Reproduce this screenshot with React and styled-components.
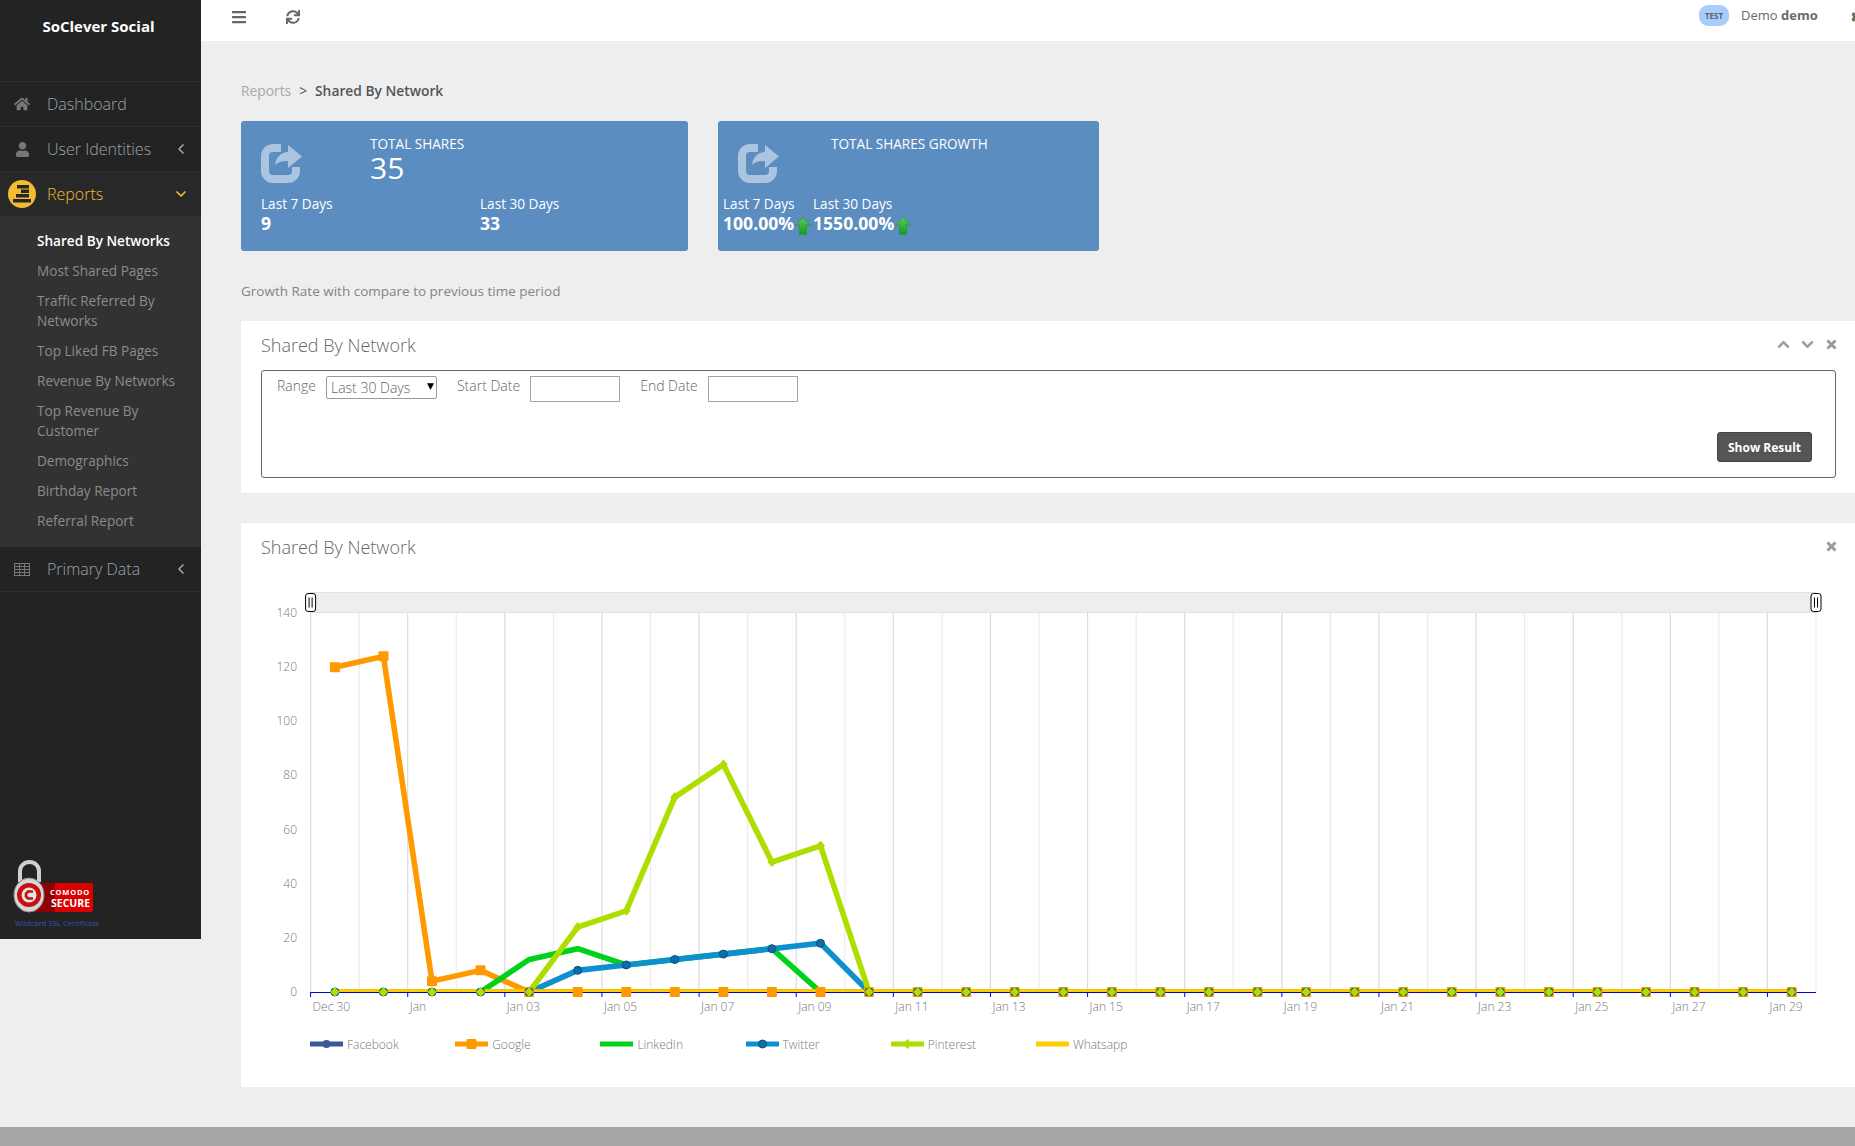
import React from "react";
import styled, { createGlobalStyle } from "styled-components";
import {
  FaBars,
  FaSync,
  FaHome,
  FaUser,
  FaChevronUp,
  FaChevronDown,
  FaTimes,
  FaCog,
} from "react-icons/fa";
import { FiChevronLeft, FiChevronDown } from "react-icons/fi";

const GlobalStyle = createGlobalStyle`
  html, body {
    margin: 0;
    padding: 0;
    height: 100%;
    overflow: hidden;
    background: #eeeeee;
    font-family: "Open Sans", "Liberation Sans", sans-serif;
    font-size: 14px;
    color: #676a6c;
  }
  * { box-sizing: border-box; }
`;

const subItems = [
  { label: "Shared By Networks", active: true },
  { label: "Most Shared Pages" },
  { label: "Traffic Referred By Networks" },
  { label: "Top Liked FB Pages" },
  { label: "Revenue By Networks" },
  { label: "Top Revenue By Customer" },
  { label: "Demographics" },
  { label: "Birthday Report" },
  { label: "Referral Report" },
];

const zeros = () => Array(31).fill(0);
const withValues = (values) => {
  const out = zeros();
  Object.keys(values).forEach((k) => (out[k] = values[k]));
  return out;
};

const series = [
  { name: "Facebook", color: "#3b5998", marker: "circle", data: zeros() },
  {
    name: "Google",
    color: "#ff9900",
    marker: "square",
    data: withValues({ 0: 120, 1: 124, 2: 4, 3: 8 }),
  },
  {
    name: "LinkedIn",
    color: "#00d11a",
    data: withValues({ 4: 12, 5: 16, 6: 10, 7: 12, 8: 14, 9: 16 }),
  },
  {
    name: "Twitter",
    color: "#0d8fd0",
    marker: "dot",
    data: withValues({ 5: 8, 6: 10, 7: 12, 8: 14, 9: 16, 10: 18 }),
  },
  {
    name: "Pinterest",
    color: "#aede00",
    marker: "diamond",
    data: withValues({ 5: 24, 6: 30, 7: 72, 8: 84, 9: 48, 10: 54 }),
  },
  { name: "Whatsapp", color: "#ffcc00", data: zeros() },
];

const dateLabels = [
  "Dec 30", "Jan", "Jan 03", "Jan 05", "Jan 07", "Jan 09", "Jan 11", "Jan 13",
  "Jan 15", "Jan 17", "Jan 19", "Jan 21", "Jan 23", "Jan 25", "Jan 27", "Jan 29",
];

const plotLeft = 310.6;
const plotRight = 1816;
const plotTop = 612;
const plotBottom = 991;
const step = (plotRight - plotLeft) / 31;
const xAt = (i) => plotLeft + (i + 0.5) * step;
const yAt = (v) => plotBottom - (v / 140) * (plotBottom - plotTop);

const Marker = ({ type, color, x, y }) => {
  if (type === "circle") return <circle cx={x} cy={y} r="4" fill={color} />;
  if (type === "square")
    return <rect x={x - 5} y={y - 5} width="10" height="10" rx="1" fill={color} />;
  if (type === "dot")
    return <circle cx={x} cy={y} r="4" fill="#0b6ea8" stroke="#0a4f7c" strokeWidth="1" />;
  if (type === "diamond")
    return (
      <polygon
        points={`${x},${y - 5} ${x + 4.5},${y} ${x},${y + 5} ${x - 4.5},${y}`}
        fill={color}
      />
    );
  return null;
};

const SharesChart = () => (
  <ChartSvg viewBox="241 580 1614 440">
    <defs>
      <clipPath id="plot-clip">
        <rect x={plotLeft} y={plotTop} width={plotRight - plotLeft} height={plotBottom - plotTop} />
      </clipPath>
    </defs>
    {Array.from({ length: 32 }).map((_, i) => (
      <line
        key={i}
        x1={plotLeft + i * step}
        x2={plotLeft + i * step}
        y1={plotTop}
        y2={plotBottom}
        stroke={i % 2 === 0 ? "#dcdcdc" : "#ececec"}
        strokeWidth="1.2"
      />
    ))}
    <rect x={plotLeft} y="591.5" width={plotRight - plotLeft} height="20" fill="#eeeeee" stroke="#e0e0e0" />
    {[plotLeft, plotRight].map((x) => (
      <g key={x}>
        <rect x={x - 5} y="592.5" width="10" height="18" rx="2.5" fill="#fff" stroke="#000" />
        <line x1={x - 1.5} x2={x - 1.5} y1="596.500" y2="606.500" stroke="#000" />
        <line x1={x + 1.5} x2={x + 1.5} y1="596.500" y2="606.500" stroke="#000" />
      </g>
    ))}

    {[0, 20, 40, 60, 80, 100, 120, 140].map((v) => (
      <AxisText key={v} x="297" y={yAt(v) + 4} textAnchor="end">
        {v}
      </AxisText>
    ))}
    {dateLabels.map((label, k) => (
      <AxisText key={label} x={plotLeft + 2 + k * step * 2} y="1010">
        {label}
      </AxisText>
    ))}

    <line x1={plotLeft} x2={plotRight} y1="991.5" y2="991.5" stroke="#0000e0" strokeWidth="1.2" />
    {Array.from({ length: 16 }).map((_, k) => (
      <line
        key={k}
        x1={plotLeft + k * step * 2}
        x2={plotLeft + k * step * 2}
        y1="991"
        y2="996"
        stroke="#0000e0"
      />
    ))}

    <g clipPath="url(#plot-clip)">
      {series.map((s) => (
        <polyline
          key={s.name}
          points={s.data.map((v, i) => `${xAt(i)},${yAt(v)}`).join(" ")}
          fill="none"
          stroke={s.color}
          strokeWidth="5.6"
          strokeLinejoin="miter"
        />
      ))}
    </g>
    {series.map((s) =>
      s.data.map((v, i) => (
        <Marker key={s.name + i} type={s.marker} color={s.color} x={xAt(i)} y={yAt(v)} />
      ))
    )}
  </ChartSvg>
);

const LegendKey = ({ color, marker }) => (
  <svg width="33" height="12" viewBox="0 0 33 12">
    <line x1="0" x2="33" y1="6" y2="6" stroke={color} strokeWidth="5" />
    <Marker type={marker} color={color} x={16.5} y={6} />
  </svg>
);

const ShareIcon = () => (
  <ShareSvg viewBox="0 0 42 40">
    <path
      d="M20 4H12a8 8 0 0 0-8 8V27a8 8 0 0 0 8 8H27a8 8 0 0 0 8-8V23"
      fill="none"
      stroke="#abc5e0"
      strokeWidth="8"
    />
    <path d="M27 1L41 12.500 27 24V17C21 16.500 17 18 14 21 15 13 20 8.500 27 8z" fill="#abc5e0" />
  </ShareSvg>
);

const UpArrow = () => (
  <ArrowSvg viewBox="0 0 16 18">
    <defs>
      <linearGradient id="up-green" x1="0" y1="0" x2="0" y2="1">
        <stop offset="0" stopColor="#5cc85c" />
        <stop offset="1" stopColor="#0d9c1f" />
      </linearGradient>
    </defs>
    <path
      d="M8 .5L15.500 8H11.500V17.500H4.500V8H.5z"
      fill="url(#up-green)"
      stroke="#2a9a3a"
      strokeWidth=".8"
    />
  </ArrowSvg>
);

const ReportsIcon = () => (
  <svg width="28" height="28" viewBox="0 0 28 28">
    <circle cx="14" cy="14" r="14" fill="#f2bb30" />
    <g fill="#262626">
      <rect x="9" y="5" width="12" height="3.500" />
      <rect x="13" y="9.500" width="8" height="3.500" />
      <rect x="8" y="14" width="13" height="3.500" />
      <rect x="5" y="19" width="18" height="3.500" />
    </g>
  </svg>
);

const TableIcon = () => (
  <svg width="16" height="13" viewBox="0 0 16 13" fill="none" stroke="#777" strokeWidth="1">
    <rect x=".5" y=".5" width="15" height="12" />
    <path d="M.5 3.500h15M.5 6.500h15M.5 9.500h15M5.500 .5v12M10.500 .5v12" />
  </svg>
);

const ComodoLogo = () => (
  <LogoSvg viewBox="0 0 82 54">
    <path d="M7 22V11a9.500 9 0 0 1 19 0v11" fill="none" stroke="#cfcfcf" strokeWidth="4" />
    <rect x="20" y="23" width="60" height="29" rx="2" fill="#d90000" />
    <rect x="20" y="23" width="22" height="29" fill="#8f0000" />
    <ellipse cx="16" cy="35" rx="15" ry="17" fill="#d7d7d7" stroke="#8d8d8d" />
    <circle cx="16" cy="35" r="12" fill="#c80f12" />
    <circle cx="16" cy="35" r="7.500" fill="#e6e6e6" />
    <path d="M20 31.500h-5l-2 2v3l2 2h5" fill="none" stroke="#c80f12" strokeWidth="2.600" />
    <LogoText x="37" y="35" fontSize="7.500" letterSpacing="0.800">COMODO</LogoText>
    <LogoText x="38" y="47" fontSize="10.500">SECURE</LogoText>
  </LogoSvg>
);

const App = () => (
  <Page>
    <GlobalStyle />
    <Body>
      <Sidebar>
        <Brand>SoClever Social</Brand>
        <NavItem>
          <NavIcon><FaHome /></NavIcon>
          Dashboard
        </NavItem>
        <NavItem>
          <NavIcon><FaUser size={15} /></NavIcon>
          User Identities
          <NavCaret><FiChevronLeft /></NavCaret>
        </NavItem>
        <NavItem $active>
          <NavIcon><ReportsIcon /></NavIcon>
          Reports
          <NavCaret><FiChevronDown /></NavCaret>
        </NavItem>
        <SubMenu>
          {subItems.map((item) => (
            <SubItem key={item.label} $active={item.active}>
              {item.label}
            </SubItem>
          ))}
        </SubMenu>
        <NavItem $last>
          <NavIcon><TableIcon /></NavIcon>
          Primary Data
          <NavCaret><FiChevronLeft /></NavCaret>
        </NavItem>
        <SslBlock>
          <ComodoLogo />
          <SslText>Wildcard SSL Certificate</SslText>
        </SslBlock>
      </Sidebar>

      <Main>
        <TopBar>
          <TopIcons>
            <FaBars size={16} />
            <FaSync size={14} />
          </TopIcons>
          <UserArea>
            <TestBadge>TEST</TestBadge>
            <UserName>
              Demo <strong>demo</strong>
            </UserName>
            <CutIcon><FaCog size={14} /></CutIcon>
          </UserArea>
        </TopBar>

        <Content>
          <Breadcrumb>
            <span>Reports</span>
            <i>&gt;</i>
            <b>Shared By Network</b>
          </Breadcrumb>

          <CardRow>
            <StatCard $width={447} $statsInset={20}>
              <CardTop>
                <ShareIcon />
                <CardHead>
                  <CardTitle>TOTAL SHARES</CardTitle>
                  <CardNumber>35</CardNumber>
                </CardHead>
              </CardTop>
              <StatRow>
                <Stat $width={219}>
                  <StatLabel>Last 7 Days</StatLabel>
                  <StatValue>9</StatValue>
                </Stat>
                <Stat>
                  <StatLabel>Last 30 Days</StatLabel>
                  <StatValue>33</StatValue>
                </Stat>
              </StatRow>
            </StatCard>

            <StatCard $width={381} $statsInset={5}>
              <CardTop>
                <ShareIcon />
                <CardHead $offset={51}>
                  <CardTitle>TOTAL SHARES GROWTH</CardTitle>
                </CardHead>
              </CardTop>
              <StatRow>
                <Stat $width={90}>
                  <StatLabel>Last 7 Days</StatLabel>
                  <StatValue>100.00%<UpArrow /></StatValue>
                </Stat>
                <Stat>
                  <StatLabel>Last 30 Days</StatLabel>
                  <StatValue>1550.00%<UpArrow /></StatValue>
                </Stat>
              </StatRow>
            </StatCard>
          </CardRow>

          <GrowthNote>Growth Rate with compare to previous time period</GrowthNote>

          <Panel>
            <PanelHead>
              <PanelTitle>Shared By Network</PanelTitle>
              <PanelTools>
                <FaChevronUp />
                <FaChevronDown />
                <FaTimes />
              </PanelTools>
            </PanelHead>
            <FilterBox>
              <FilterRow>
                <FieldLabel>Range</FieldLabel>
                <SelectWrap>
                  <RangeSelect defaultValue="30">
                    <option value="30">Last 30 Days</option>
                    <option value="7">Last 7 Days</option>
                  </RangeSelect>
                </SelectWrap>
                <FieldLabel $gap={20}>Start Date</FieldLabel>
                <DateInput />
                <FieldLabel $gap={20}>End Date</FieldLabel>
                <DateInput />
              </FilterRow>
              <FilterActions>
                <ShowButton>Show Result</ShowButton>
              </FilterActions>
            </FilterBox>
          </Panel>

          <ChartPanel>
            <PanelHead>
              <PanelTitle>Shared By Network</PanelTitle>
              <PanelTools>
                <FaTimes />
              </PanelTools>
            </PanelHead>
            <ChartSpacer />
            <SharesChart />
            <Legend>
              {series.map((s) => (
                <LegendItem key={s.name}>
                  <LegendKey color={s.color} marker={s.marker} />
                  {s.name}
                </LegendItem>
              ))}
            </Legend>
          </ChartPanel>
        </Content>
      </Main>
    </Body>
    <Footer />
  </Page>
);

const Page = styled.div`
  display: flex;
  flex-direction: column;
  width: 1855px;
  height: 1146px;
  background: #eeeeee;
`;

const Body = styled.div`
  flex: 1;
  display: flex;
  align-items: flex-start;
  min-height: 0;
`;

const Sidebar = styled.aside`
  width: 201px;
  height: 939px;
  flex-shrink: 0;
  display: flex;
  flex-direction: column;
  background: #232323;
`;

const Brand = styled.div`
  height: 81px;
  padding-top: 15px;
  padding-right: 4px;
  line-height: 22px;
  text-align: center;
  font-size: 15px;
  font-weight: 700;
  color: #fff;
`;

const NavItem = styled.div`
  position: relative;
  display: flex;
  align-items: center;
  height: 45px;
  padding-left: 47px;
  border-top: 1px solid #2d2d2d;
  ${(p) => p.$last && "border-bottom: 1px solid #2d2d2d; border-top: 0;"}
  font-size: 16px;
  font-weight: 300;
  color: ${(p) => (p.$active ? "#f2bb30" : "#9aa3ab")};
  background: ${(p) => (p.$active ? "#282828" : "transparent")};
`;

const NavIcon = styled.span`
  position: absolute;
  left: 8px;
  width: 28px;
  display: flex;
  justify-content: center;
  align-items: center;
  color: #777;
  font-size: 16px;
`;

const NavCaret = styled.span`
  position: absolute;
  left: 173px;
  display: flex;
  font-size: 16px;
  color: inherit;
  svg {
    stroke-width: 2.6;
  }
`;

const SubMenu = styled.div`
  padding: 10px 15px 11px 37px;
  background: #323232;
`;

const SubItem = styled.div`
  padding: 5px 0;
  line-height: 20px;
  font-size: 13.6px;
  font-weight: ${(p) => (p.$active ? 600 : 400)};
  color: ${(p) => (p.$active ? "#fff" : "#8c8c8c")};
`;

const SslBlock = styled.div`
  margin-top: auto;
  padding: 0 0 10px 13px;
`;

const LogoSvg = styled.svg`
  display: block;
  width: 82px;
  height: 54px;
`;

const LogoText = styled.text`
  font-family: "Open Sans", "Liberation Sans", sans-serif;
  font-weight: 700;
  fill: #fff;
`;

const SslText = styled.div`
  margin-top: 3px;
  padding-left: 2px;
  font-size: 7.7px;
  line-height: 12px;
  color: #2a5ab0;
`;

const Main = styled.main`
  flex: 1;
  min-width: 0;
`;

const TopBar = styled.header`
  height: 41px;
  display: flex;
  justify-content: space-between;
  background: #fff;
`;

const TopIcons = styled.div`
  display: flex;
  align-items: center;
  gap: 39px;
  height: 34px;
  padding-left: 30px;
  color: #666;
`;

const UserArea = styled.div`
  display: flex;
  align-items: flex-start;
  padding-top: 5px;
`;

const TestBadge = styled.div`
  width: 30px;
  height: 21px;
  border-radius: 9px;
  background: #a9cdfb;
  color: #54606e;
  font-size: 8px;
  font-weight: 700;
  line-height: 21px;
  text-align: center;
`;

const UserName = styled.div`
  margin-left: 12px;
  width: 114px;
  line-height: 21px;
  font-size: 13px;
  color: #676a6c;
  strong {
    font-weight: 700;
  }
`;

const CutIcon = styled.span`
  position: absolute;
  left: 1851px;
  top: 9px;
  color: #7a6a55;
`;

const Content = styled.div`
  padding: 39px 0 0 40px;
`;

const Breadcrumb = styled.div`
  display: flex;
  align-items: center;
  gap: 8px;
  height: 20px;
  font-size: 13.8px;
  color: #a9a9a9;
  i {
    font-style: normal;
    color: #555;
  }
  b {
    font-weight: 600;
    color: #555;
  }
`;

const CardRow = styled.div`
  display: flex;
  gap: 30px;
  margin-top: 21px;
`;

const StatCard = styled.div`
  width: ${(p) => p.$width}px;
  height: 130px;
  padding-top: 13px;
  border-radius: 3px;
  background: #5c8dc1;
  color: #fff;
  --stats-inset: ${(p) => p.$statsInset}px;
`;

const CardTop = styled.div`
  display: flex;
  height: 60px;
  padding-left: 20px;
`;

const ShareSvg = styled.svg`
  width: 42px;
  height: 40px;
  margin-top: 10px;
  flex-shrink: 0;
`;

const ArrowSvg = styled.svg`
  width: 16px;
  height: 18px;
  flex-shrink: 0;
  margin-bottom: -2px;
`;

const CardHead = styled.div`
  margin-left: ${(p) => p.$offset || 67}px;
`;

const CardTitle = styled.div`
  line-height: 20px;
  font-size: 13.6px;
  font-weight: 400;
`;

const CardNumber = styled.div`
  line-height: 28px;
  font-size: 30px;
  font-weight: 400;
`;

const StatRow = styled.div`
  display: flex;
  padding-left: var(--stats-inset);
`;

const Stat = styled.div`
  width: ${(p) => (p.$width ? `${p.$width}px` : "auto")};
`;

const StatLabel = styled.div`
  line-height: 20px;
  font-size: 13.6px;
  font-weight: 400;
`;

const StatValue = styled.div`
  display: flex;
  align-items: flex-end;
  gap: 1px;
  height: 19px;
  line-height: 19px;
  font-size: 17.6px;
  font-weight: 700;
`;

const GrowthNote = styled.div`
  margin-top: 30px;
  line-height: 20px;
  font-size: 13.5px;
  font-weight: 400;
  color: #848484;
`;

const Panel = styled.section`
  margin-top: 20px;
  padding: 0 19px 15px 20px;
  height: 172px;
  border-radius: 2px 0 0 2px;
  background: #fff;
`;

const ChartPanel = styled.section`
  margin-top: 30px;
  height: 564px;
  padding-top: 0;
  border-radius: 2px 0 0 2px;
  background: #fff;
`;

const PanelHead = styled.div`
  position: relative;
  height: 49px;
  ${ChartPanel} & {
    padding-left: 20px;
  }
`;

const PanelTitle = styled.h3`
  margin: 0;
  padding-top: 12px;
  line-height: 25px;
  font-size: 18px;
  font-weight: 300;
  color: #666;
`;

const PanelTools = styled.div`
  position: absolute;
  top: 17px;
  right: -2px;
  display: flex;
  gap: 11px;
  font-size: 13px;
  color: #9a9a9a;
  svg {
    stroke: currentColor;
    stroke-width: 25;
  }
  ${ChartPanel} & {
    right: 17px;
  }
`;

const FilterBox = styled.div`
  height: 108px;
  display: flex;
  flex-direction: column;
  justify-content: space-between;
  padding: 5px 23px 15px 15px;
  border: 1px solid #666;
  border-radius: 3px;
`;

const FilterRow = styled.div`
  display: flex;
  align-items: flex-start;
`;

const FieldLabel = styled.label`
  margin-left: ${(p) => p.$gap || 0}px;
  margin-right: 10px;
  line-height: 20px;
  font-size: 14px;
  font-weight: 300;
  color: #666;
`;

const SelectWrap = styled.div`
  position: relative;
  height: 23px;
  &::after {
    content: "▼";
    position: absolute;
    top: 4px;
    right: 3px;
    font-family: "DejaVu Sans", sans-serif;
    font-size: 9px;
    line-height: 12px;
    color: #000;
    pointer-events: none;
  }
`;

const RangeSelect = styled.select`
  display: block;
  width: 111px;
  height: 23px;
  padding: 0 0 0 4px;
  appearance: none;
  border: 1px solid #999;
  border-radius: 2px;
  background: #fff;
  font-family: "Open Sans", "Liberation Sans", sans-serif;
  font-size: 14px;
  font-weight: 300;
  color: #666;
`;

const DateInput = styled.input`
  width: 90px;
  height: 26px;
  border: 1px solid #a5a5a5;
  background: #fff;
`;

const FilterActions = styled.div`
  display: flex;
  justify-content: flex-end;
`;

const ShowButton = styled.button`
  width: 95px;
  height: 30px;
  border: 1px solid #444;
  border-radius: 3px;
  background: #555;
  color: #fff;
  font-family: "Open Sans", "Liberation Sans", sans-serif;
  font-size: 12px;
  font-weight: 700;
`;

const ChartSpacer = styled.div`
  height: 9px;
`;

const ChartSvg = styled.svg`
  display: block;
  width: 1614px;
  height: 440px;
`;

const AxisText = styled.text`
  font-family: "Open Sans", "Liberation Sans", sans-serif;
  font-size: 12px;
  font-weight: 300;
  fill: #777;
`;

const Legend = styled.div`
  display: flex;
  height: 46px;
  align-items: center;
  padding-left: 69px;
`;

const LegendItem = styled.div`
  display: flex;
  align-items: center;
  gap: 4px;
  width: 145.2px;
  font-size: 12px;
  font-weight: 300;
  color: #777;
`;

const Footer = styled.footer`
  height: 19px;
  flex-shrink: 0;
  background: #a6a6a6;
`;

export default App;
